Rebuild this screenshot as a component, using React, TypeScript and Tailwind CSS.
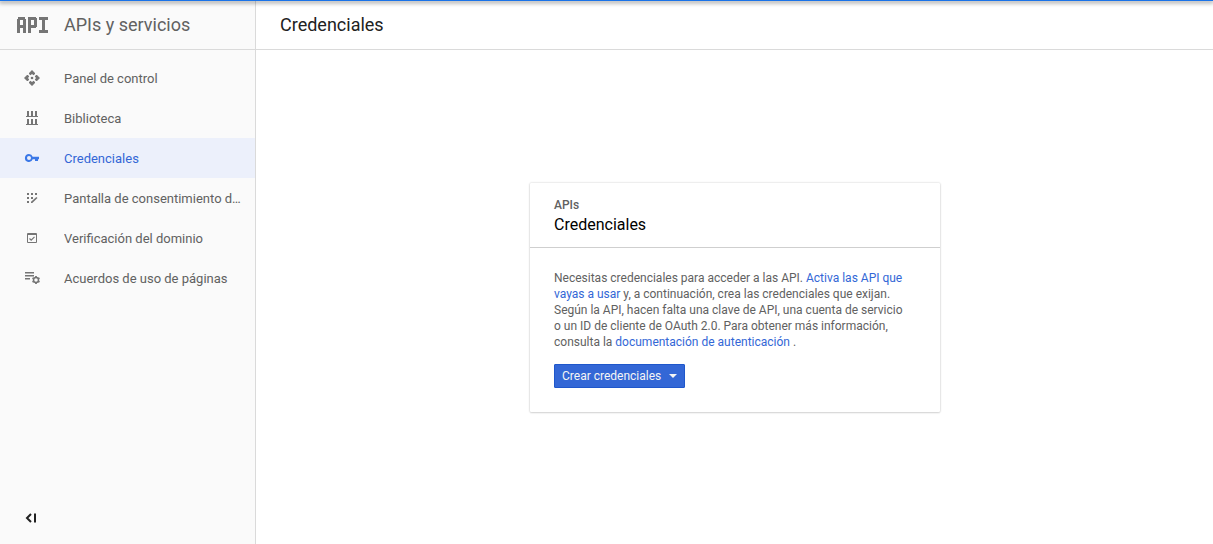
import type { ReactNode } from "react";

function ApiLogo() {
  return (
    <svg viewBox="-1 0 32 16" className="h-4 w-8 shrink-0" fill="#757575" role="img" aria-label="API">
      <rect x="0" y="2" width="3" height="14" />
      <rect x="1" y="0" width="7" height="3" />
      <rect x="6" y="2" width="3" height="14" />
      <rect x="3" y="8" width="3" height="3" />
      <rect x="11" y="0" width="3" height="16" />
      <rect x="14" y="0" width="5" height="3" />
      <rect x="17" y="1" width="3" height="9" />
      <rect x="14" y="8" width="5" height="3" />
      <rect x="22" y="0" width="9" height="3" />
      <rect x="25" y="3" width="3" height="10" />
      <rect x="22" y="13" width="9" height="3" />
    </svg>
  );
}

function Icon({ children }: { children: ReactNode }) {
  return (
    <svg viewBox="0 0 16 16" className="size-4 shrink-0 overflow-visible" fill="currentColor" aria-hidden="true">
      {children}
    </svg>
  );
}

const items = [
  {
    label: "Panel de control",
    icon: (
      <Icon>
        <path d="M8 0l3 3v1L9.500 5.200 8 4 6.500 5.200 5 4V3zM8 16l3-3v-1l-1.500-1.200L8 12l-1.500-1.200L5 12v1zM0 8l3-3h1l1.200 1.500L4 8l1.200 1.500L4 11H3zM16 8l-3-3h-1l-1.200 1.500L12 8l-1.200 1.500L12 11h1z" />
        <circle cx="8" cy="8" r="1.300" />
      </Icon>
    ),
  },
  {
    label: "Biblioteca",
    icon: (
      <Icon>
        <path d="M3 1h2v5h2V1h2v5h2V1h2v5h1v1H2V6h1zM3 9h2v5h2V9h2v5h2V9h2v5h1v1H2v-1h1z" />
      </Icon>
    ),
  },
  {
    label: "Credenciales",
    active: true,
    icon: (
      <Icon>
        <path
          fillRule="evenodd"
          d="M5 4a4 4 0 1 0 3.700 5.300H11V11h3V9.300h1V6.700H8.700A4 4 0 0 0 5 4zm0 2a2 2 0 1 1 0 4 2 2 0 0 1 0-4z"
        />
      </Icon>
    ),
  },
  {
    label: "Pantalla de consentimiento de OAuth",
    icon: (
      <Icon>
        <path d="M3 3h2v2H3zM7 3h2v2H7zM11 3h2v2h-2zM3 7h2v2H3zM7 7h2v2H7zM3 11h2v2H3z" />
        <path d="M7 13v-1.300L12.400 7 13.500 8 8.300 13z" />
      </Icon>
    ),
  },
  {
    label: "Verificación del dominio",
    icon: (
      <Icon>
        <path fillRule="evenodd" d="M4 3h8a1 1 0 0 1 1 1v8a1 1 0 0 1-1 1H4a1 1 0 0 1-1-1V4a1 1 0 0 1 1-1zm0 2v7h8V5z" />
        <path d="M5.500 8.500l1.700 1.700 3.300-3.300" fill="none" stroke="currentColor" strokeWidth="1.200" />
      </Icon>
    ),
  },
  {
    label: "Acuerdos de uso de páginas",
    icon: (
      <Icon>
        <path d="M1 2h9v1.500H1zM1 5h9v1.500H1zM1 8h5v1.500H1z" />
        <circle cx="12" cy="10" r="2.500" fill="none" stroke="currentColor" strokeWidth="1.500" />
        <path
          d="M12 6v1.500M12 12.500V14M8.500 8l1.400.8M14.100 11.200l1.400.8M8.500 12l1.400-.8M14.100 8.800l1.400-.8"
          stroke="currentColor"
          strokeWidth="1.800"
        />
      </Icon>
    ),
  },
];

export default function App() {
  return (
    <div className="relative flex min-h-screen bg-white font-['Roboto',sans-serif] text-[#212121]">
      <div className="absolute inset-x-0 top-0 h-px bg-[#1a73e8] shadow-[0_1px_4px_1px_rgba(0,0,0,0.4)]" />

      <aside className="flex w-64 shrink-0 flex-col border-r border-[#dadada] bg-[#fafafa]">
        <div className="flex h-[50px] items-center gap-4 border-b border-[#dadada] pl-4">
          <ApiLogo />
          <h2 className="text-lg text-[#616161]">APIs y servicios</h2>
        </div>
        <nav className="pt-2">
          <ul>
            {items.map((item) => (
              <li key={item.label}>
                <a
                  href="#"
                  aria-current={item.active ? "page" : undefined}
                  className={
                    item.active
                      ? "flex h-10 items-center gap-6 bg-[#ecf0fb] pr-3 pl-6 text-[#3b78e7]"
                      : "flex h-10 items-center gap-6 pr-3 pl-6 text-[#757575]"
                  }
                >
                  {item.icon}
                  <span
                    className={
                      item.active
                        ? "truncate pt-px text-[13px]/5 text-[#3367d6]"
                        : "truncate pt-px text-[13px]/5 text-[#616161]"
                    }
                  >
                    {item.label}
                  </span>
                </a>
              </li>
            ))}
          </ul>
        </nav>
        <button type="button" aria-label="Contraer menú" className="mt-auto mb-[18px] ml-6 size-4 text-[#212121]">
          <Icon>
            <path d="M7 4L3 8l4 4" fill="none" stroke="currentColor" strokeWidth="2" />
            <path d="M10 3.500h2v9h-2z" />
          </Icon>
        </button>
      </aside>

      <main className="flex min-w-0 flex-1 flex-col">
        <header className="flex h-[50px] items-center border-b border-[#dadada] px-6">
          <h1 className="text-lg">Credenciales</h1>
        </header>
        <div className="flex flex-1 items-center justify-center pl-px">
          <section className="w-full max-w-[410px] rounded-[1px] bg-white shadow-[0_0_2px_rgba(0,0,0,0.24),0_1px_2px_rgba(0,0,0,0.12)]">
            <div className="border-b border-[#cfcfcf] px-6 pt-3.5 pb-2.5">
              <p className="text-xs font-medium text-[#616161]">APIs</p>
              <h2 className="text-base/6 text-black">Credenciales</h2>
            </div>
            <div className="pt-[22px] pr-8 pb-6 pl-6">
              <p className="text-xs text-[#616161]">
                Necesitas credenciales para acceder a las API.{" "}
                <a href="#" className="text-[#3367d6]">
                  Activa las API que vayas a usar
                </a>{" "}
                y, a continuación, crea las credenciales que exijan. Según la API, hacen falta una clave de API, una
                cuenta de servicio o un ID de cliente de OAuth 2.0. Para obtener más información, consulta la{" "}
                <a href="#" className="text-[#3367d6]">
                  documentación de autenticación
                </a>{" "}
                .
              </p>
              <button
                type="button"
                className="mt-3.5 flex h-6 items-center gap-2 rounded-[1px] border border-[#1f57cb] bg-[#3367d6] px-[7px] pt-px text-xs text-[#f5f5f5]"
              >
                Crear credenciales
                <svg viewBox="0 0 8 4" className="h-1 w-2" fill="currentColor" aria-hidden="true">
                  <path d="M0 0h8L4 4z" />
                </svg>
              </button>
            </div>
          </section>
        </div>
      </main>
    </div>
  );
}
